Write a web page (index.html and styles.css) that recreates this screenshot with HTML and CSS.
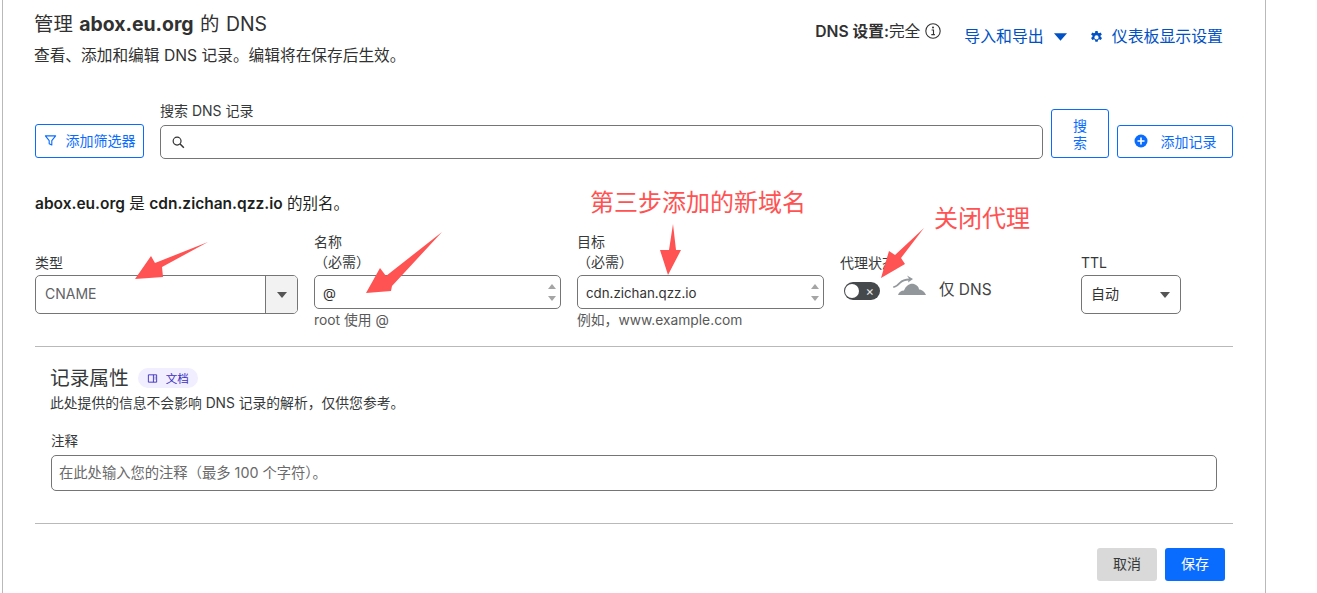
FILE: index.html
```html
<!DOCTYPE html>
<html lang="zh">
<head>
<meta charset="utf-8">
<title>DNS</title>
<link rel="stylesheet" href="styles.css">
</head>
<body>
<main class="card">
  <header class="head">
    <div class="head-left">
      <h1 class="title">管理 <b>abox.eu.org</b> 的 DNS</h1>
      <p class="subtitle">查看、添加和编辑 DNS 记录。编辑将在保存后生效。</p>
    </div>
    <div class="head-right">
      <div class="dns-setting"><b>DNS 设置:</b><span>完全</span>
        <svg class="info" viewBox="0 0 16 16" width="16" height="16"><circle cx="8" cy="8" r="7.2" fill="none" stroke="#333" stroke-width="1.1"/><path d="M6.600 7h1.900v4.400M6.300 11.600h3.600" fill="none" stroke="#333" stroke-width="1.1"/><circle cx="8" cy="4.600" r="1" fill="#333"/></svg>
      </div>
      <a class="link link-io">导入和导出<svg class="caret-blue" viewBox="0 0 14 8" width="13" height="8"><path d="M0 0h14L7 8z" fill="#0051c3"/></svg></a>
      <a class="link link-gear"><svg viewBox="0 0 16 16" width="13" height="13"><path fill="#0051c3" fill-rule="evenodd" d="M6.600 0h2.800l.4 2.200 1.200.6 2-1 1.600 2.400-1.600 1.400v1.600l1.800 1.400-1.600 2.600-2.100-.9-1.200.7-.5 2.300H6.600l-.4-2.300-1.200-.7-2.100.9L1.300 8.600 3 7.200V5.600L1.300 4.200l1.600-2.400 2 1 1.300-.6zM8 5.300a2.600 2.600 0 1 0 0 5.200 2.600 2.600 0 0 0 0-5.200z"/></svg>仪表板显示设置</a>
    </div>
  </header>

  <section class="toolbar">
    <button class="btn btn-filter"><svg viewBox="0 0 14 14" width="13" height="13"><path d="M1.500 2h11L8.400 7.200v4.600L5.600 10.400V7.200z" fill="none" stroke="#0a6cff" stroke-width="1.2" stroke-linejoin="round"/></svg>添加筛选器</button>
    <div class="search">
      <label class="label">搜索 DNS 记录</label>
      <div class="input search-input"><svg viewBox="0 0 16 16" width="15" height="15"><circle cx="6.500" cy="6.500" r="4.200" fill="none" stroke="#333" stroke-width="1.3"/><path d="M9.700 9.700l4 4" stroke="#333" stroke-width="1.6"/></svg></div>
    </div>
    <button class="btn btn-search">搜索</button>
    <button class="btn btn-add"><svg viewBox="0 0 14 14" width="14" height="14"><circle cx="7" cy="7" r="6.500" fill="#0a6cff"/><path d="M3.500 7h7M7 3.500v7" stroke="#fff" stroke-width="1.6"/></svg>添加记录</button>
  </section>

  <p class="alias"><b>abox.eu.org</b> 是 <b>cdn.zichan.qzz.io</b> 的别名。</p>

  <section class="form">
    <div class="col col-type">
      <label class="label">类型</label>
      <div class="input select-type"><span class="val">CNAME</span><span class="select-btn"><i class="caret"></i></span></div>
    </div>
    <div class="col col-field">
      <label class="label">名称<br>（必需）</label>
      <div class="input text-input"><span class="val-dark">@</span><span class="spin"><i class="up"></i><i class="down"></i></span></div>
      <div class="help">root 使用 @</div>
    </div>
    <div class="col col-field">
      <label class="label">目标<br>（必需）</label>
      <div class="input text-input"><span class="val-dark">cdn.zichan.qzz.io</span><span class="spin"><i class="up"></i><i class="down"></i></span></div>
      <div class="help">例如，www.example.com</div>
    </div>
    <div class="col col-proxy">
      <label class="label">代理状态</label>
      <div class="proxy-row">
        <span class="toggle"><i class="knob"></i><span class="x">×</span></span>
        <svg class="cloud" viewBox="0 0 34 24" width="34" height="24"><path fill="#92979b" d="M5 22c1-3 3-4.500 6-4.500 2-5 6-7.500 10-6.500 3 1 5 3 5 5.500 3 0 6 2.500 7 5.500z"/><path d="M0 13.500c3-1 4-2 6-4 3-3 6-4 10-4l-2-3 6 3.500-5 3.500.5-2c-3 0-6 1-8 3-2 2-4 3.500-7 4.500z" fill="#92979b"/></svg>
        <span class="dns-only">仅 DNS</span>
      </div>
    </div>
    <div class="col col-ttl">
      <label class="label">TTL</label>
      <div class="input select-ttl"><span>自动</span><i class="caret caret-dark"></i></div>
    </div>
  </section>

  <hr class="rule">

  <section class="attrs">
    <div class="attrs-head">
      <h2 class="attrs-title">记录属性</h2>
      <span class="badge"><svg viewBox="0 0 12 12" width="11" height="11"><path d="M1.500 2h9v8h-9zM7 2v8M8.300 4.500h1M8.300 6.500h1" fill="none" stroke="#3c2fbd" stroke-width="1"/></svg>文档</span>
    </div>
    <p class="attrs-desc">此处提供的信息不会影响 DNS 记录的解析，仅供您参考。</p>
    <label class="label label-note">注释</label>
    <div class="input note-input">在此处输入您的注释（最多 100 个字符）。</div>
  </section>

  <hr class="rule">

  <footer class="actions">
    <button class="btn-cancel">取消</button>
    <button class="btn-save">保存</button>
  </footer>

  <div class="note note-a">第三步添加的新域名</div>
  <div class="note note-b">关闭代理</div>
  <svg class="arrows" viewBox="0 0 1317 593" width="1317" height="593">
    <path fill="#ff5252" d="M208 242L162 267 163 277 135 279 151 256 155 263z"/>
    <path fill="#ff5252" d="M442 232L392 286 391 291 366 293 380 268 386 276z"/>
    <path fill="#ff5252" d="M673 224L676 250 681 250 668 275 660 250 669 250z"/>
    <path fill="#ff5252" d="M924 228L901 258 905 264 881 278 889 251 895 255z"/>
  </svg>
</main>
</body>
</html>
```
FILE: styles.css
```css
* { box-sizing: border-box; }
html, body { margin: 0; padding: 0; height: 593px; overflow: hidden; background: #fff; }
body { font-family: Inter, "Noto Sans CJK SC", sans-serif; color: #36393a; font-size: 14px; }
.card { position: relative; width: 1264px; height: 593px; margin-left: 2px; padding: 0 32px; border-left: 1px solid #b9b9b9; border-right: 1px solid #b9b9b9; overflow: hidden; }

.head { display: flex; justify-content: space-between; height: 109px; }
.title { margin: 11px 0 0 -1px; font-size: 19.4px; line-height: 26px; font-weight: 400; word-spacing: 1px; color: #313131; }
.title b { font-weight: 700; }
.subtitle { margin: 8px 0 0 -1px; font-size: 15.7px; line-height: 22px; color: #313131; }
.head-right { display: flex; align-items: flex-start; padding-top: 21px; margin-right: 10px; }
.dns-setting { display: flex; align-items: center; font-size: 15.7px; line-height: 22px; color: #313131; }
.dns-setting b { font-weight: 600; white-space: pre; }
.info { margin-left: 5px; margin-top: -2px; }
.link { display: flex; align-items: center; font-size: 15.9px; line-height: 22px; color: #0051c3; margin-top: 5px; }
.link-io { margin-left: 23px; }
.caret-blue { margin-left: 10px; }
.link-gear { margin-left: 23px; gap: 9px; }

.toolbar { display: flex; align-items: flex-end; height: 50px; }
.btn { display: flex; align-items: center; justify-content: center; background: #fff; border: 1px solid #0a6cff; border-radius: 3px; color: #0a6cff; font: inherit; padding: 0; }
.btn-filter { width: 109px; height: 34px; gap: 9px; margin-bottom: 1px; padding-bottom: 2px; font-size: 14px; white-space: nowrap; }
.search { width: 883px; margin-left: 16px; }
.label { display: block; font-size: 14px; line-height: 20px; color: #36393a; }
.search .label { margin-bottom: 4px; line-height: 20px; }
.input { border: 1px solid #757575; border-radius: 5px; background: #fff; }
.search-input { height: 34px; display: flex; align-items: center; padding-left: 10px; }
.btn-search { width: 58px; height: 49px; margin-left: 8px; line-height: 17px; padding: 0 20px; margin-bottom: 1px; }
.btn-add { width: 116px; height: 33px; margin-left: 8px; gap: 13px; margin-bottom: 1px; padding-bottom: 2px; }

.alias { margin: 35px 0 0; font-size: 15.5px; line-height: 20px; color: #1d1f20; }
.alias b { font-weight: 600; }

.form { display: flex; margin-top: 18px; height: 114px; }
.col { display: flex; flex-direction: column; }
.col-type { width: 263px; margin-right: 16px; padding-top: 21px; }
.select-type { display: flex; height: 39px; margin-top: 2px; overflow: hidden; font-size: 14px; }
.select-type .val { flex: 1; padding-left: 9px; line-height: 35px; color: #5f6366; }
.select-btn { width: 32px; border-left: 1px solid #757575; background: #f2f2f2; display: flex; align-items: center; justify-content: center; }
.caret { display: block; width: 0; height: 0; border-left: 5px solid transparent; border-right: 5px solid transparent; border-top: 6px solid #555; }
.col-field { width: 247px; margin-right: 16px; }
.text-input { display: flex; align-items: center; justify-content: space-between; height: 34px; margin-top: 3px; padding-left: 8px; font-size: 13.3px; }
.val-dark { color: #333; padding-top: 2px; }
.spin { display: flex; flex-direction: column; gap: 7px; margin-right: 4px; }
.spin i { display: block; width: 0; height: 0; border-left: 4px solid transparent; border-right: 4px solid transparent; }
.spin .up { border-bottom: 5px solid #a5a5a5; }
.spin .down { border-top: 5px solid #a5a5a5; }
.help { margin-top: 1px; font-size: 13.8px; line-height: 20px; color: #595959; }
.col-proxy { width: 241px; padding-top: 21px; }
.proxy-row { display: flex; align-items: center; height: 36px; padding-left: 4px; margin-top: -1px; }
.toggle { position: relative; display: flex; align-items: center; justify-content: flex-end; width: 36px; height: 18px; border-radius: 9px; background: #46494c; padding-right: 6px; margin-top: 2px; }
.knob { position: absolute; left: 1px; top: 2px; width: 14px; height: 14px; border-radius: 50%; background: #fff; }
.x { color: #e6e6e6; font-size: 13px; line-height: 18px; }
.cloud { margin-left: 13px; margin-top: -10px; }
.dns-only { margin-left: 12px; font-size: 15.5px; color: #444; margin-top: -4px; }
.col-ttl { width: 100px; padding-top: 21px; }
.select-ttl { display: flex; align-items: center; justify-content: space-between; height: 39px; margin-top: 2px; padding: 0 10px 4px 9px; color: #333; }
.caret-dark { display: block; margin-top: 4px; }

.rule { border: 0; border-top: 1px solid #b9b9b9; margin: 0; }
.attrs { padding: 0 16px; height: 155px; }
.attrs-head { display: flex; align-items: center; height: 20px; margin-top: 21px; }
.attrs-title { margin: 0 0 0 -1px; font-size: 19.7px; line-height: 20px; font-weight: 400; color: #36393a; }
.badge { display: flex; align-items: center; gap: 8px; height: 20px; margin-left: 9px; padding: 0 9px; border-radius: 10px; background: #f0eeff; color: #3c2fbd; font-size: 11.5px; }
.attrs-desc { margin: 6px 0 0 -1px; font-size: 13.8px; line-height: 18px; color: #36393a; }
.label-note { margin-top: 20px; font-size: 13.5px; line-height: 18px; }
.note-input { height: 36px; margin-top: 5px; padding-left: 7px; font-size: 14.3px; line-height: 34px; color: #6a6a6a; }

.actions { display: flex; justify-content: flex-end; gap: 8px; margin-top: 24px; margin-right: 8px; }
.btn-cancel, .btn-save { width: 60px; height: 33px; border: 0; border-radius: 3px; font: inherit; padding: 0 0 3px; }
.btn-cancel { background: #d9d9d9; color: #36393a; }
.btn-save { background: #0a6cff; color: #fff; }

.note { position: absolute; color: #ff5252; font-size: 24px; line-height: 32px; white-space: nowrap; }
.note-a { left: 587px; top: 187px; }
.note-b { left: 931px; top: 203px; }
.arrows { position: absolute; left: -3px; top: 0; pointer-events: none; }
```
